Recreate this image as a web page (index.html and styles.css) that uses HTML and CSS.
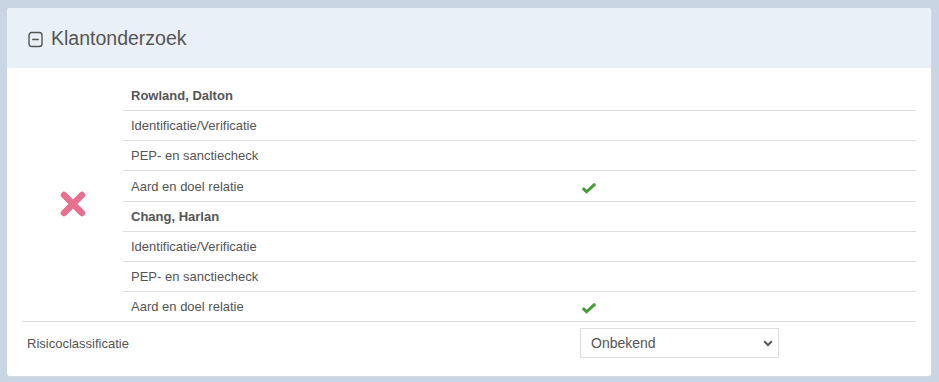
FILE: index.html
```html
<!DOCTYPE html>
<html lang="nl">

<head>
  <meta charset="UTF-8">
  <title>Klantonderzoek</title>
  <link rel="stylesheet" href="styles.css">
</head>

<body>
  <div class='card'>
    <div class='card-head'>
      <svg class='toggle' width="15" height="17" viewBox="0 0 15 17">
        <rect x="1" y="1.5" width="13" height="14" rx="2.8" fill="none" stroke="#555" stroke-width="1.4"/>
        <line x1="4.2" y1="8.5" x2="10.8" y2="8.5" stroke="#555" stroke-width="1.4"/>
      </svg>
      <h2>Klantonderzoek</h2>
    </div>
    <div class='card-body'>
      <table class='checks'>
        <colgroup>
          <col class='c-status'>
          <col class='c-item'>
          <col>
        </colgroup>
        <tr>
          <td class='status' rowspan="8">
            <svg width="26" height="26" viewBox="0 0 26 26">
              <path d="M4 4 L22 22 M22 4 L4 22" stroke="#e8708f" stroke-width="6.5" stroke-linecap="round"/>
            </svg>
          </td>
          <td class='name'>Rowland, Dalton</td>
          <td></td>
        </tr>
        <tr><td>Identificatie/Verificatie</td><td></td></tr>
        <tr><td>PEP- en sanctiecheck</td><td></td></tr>
        <tr class='done'><td>Aard en doel relatie</td><td><span class='ok'></span></td></tr>
        <tr><td class='name'>Chang, Harlan</td><td></td></tr>
        <tr><td>Identificatie/Verificatie</td><td></td></tr>
        <tr><td>PEP- en sanctiecheck</td><td></td></tr>
        <tr><td>Aard en doel relatie</td><td><span class='ok'></span></td></tr>
        <tr class='risk'>
          <td colspan="2" class='label'>Risicoclassificatie</td>
          <td>
            <div class='select-wrap'>
              <select>
                <option>Onbekend</option>
                <option>Laag</option>
                <option>Midden</option>
                <option>Hoog</option>
              </select>
              <svg class='chev' width="10" height="7" viewBox="0 0 10 7">
                <path d="M1.2 1.2 L5 5 L8.8 1.2" fill="none" stroke="#555" stroke-width="2"/>
              </svg>
            </div>
          </td>
        </tr>
      </table>
    </div>
  </div>

  <script>
    // green tick for the checks that are done
    document.querySelectorAll('.ok').forEach(el => {
      el.innerHTML = '<svg width="16" height="12" viewBox="0 0 16 12"><path d="M1.8 6.2 L5.6 9.8 L14.2 1.8" fill="none" stroke="#4a9a3c" stroke-width="3"/></svg>';
    });
  </script>
</body>
</html>
```

FILE: styles.css
```css
body {
  margin: 0;
  padding: 8px 8px 5px 7px;
  background: #c9d5e3;
  font-family: "Liberation Sans", Arial, sans-serif;
  font-size: 13px;
  color: #555;
}
.card {
  background: #fff;
  border-radius: 3px;
  box-shadow: 1px 1px 0 #d9d9d9;
  overflow: hidden;
}
.card-head {
  display: flex;
  align-items: center;
  gap: 8px;
  height: 60px;
  padding-left: 21px;
  background: #e9f0f8;
}
.card-head h2 {
  margin: 0;
  font-size: 19.5px;
  font-weight: normal;
  color: #555;
}
.toggle { margin-top: 3px; }
.card-body {
  padding: 13px 15px 12px 15px;
}
.checks {
  width: 894px;
  table-layout: fixed;
  border-collapse: collapse;
}
.c-status { width: 101px; }
.c-item { width: 450px; }
.checks td {
  height: 29px;
  padding: 0 8px;
  border-top: 1px solid #ddd;
  vertical-align: middle;
}
.checks tr:first-child td { border-top: none; }
.checks td.status {
  border-top: none;
  padding: 0;
}
.checks .done td { height: 30px; }
.checks .name { font-weight: bold; }
.status svg { display: block; margin: 6px 0 0 38px; }
.ok svg { display: block; margin-top: 3px; }
.checks .risk td {
  height: 30px;
  padding: 6px 7px 6px 7px;
}
.checks .risk td.label { padding-left: 5px; }
.select-wrap {
  position: relative;
  width: 199px;
}
.select-wrap select {
  appearance: none;
  width: 100%;
  height: 30px;
  padding: 0 24px 0 10px;
  border: 1px solid #ddd;
  background: #fff;
  font-family: "Liberation Sans", Arial, sans-serif;
  font-size: 14px;
  color: #555;
}
.chev {
  position: absolute;
  right: 6px;
  top: 12px;
  pointer-events: none;
}
```
